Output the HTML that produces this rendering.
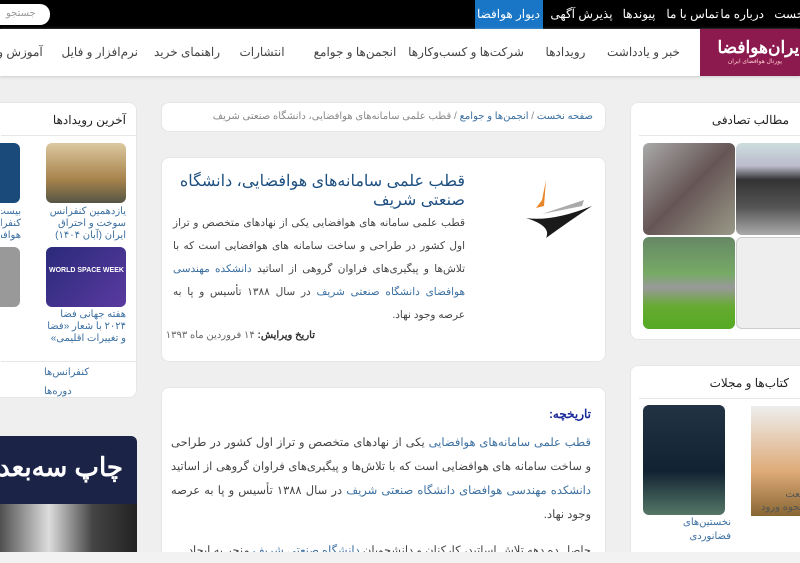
<!DOCTYPE html>
<html style="width:800px;height:563px;overflow:hidden"><head><meta charset="utf-8"><style>
*{margin:0;padding:0;box-sizing:border-box}
body{width:800px;height:563px;overflow:hidden;background:#efefef;font-family:"Liberation Sans","Noto Sans CJK SC",sans-serif;position:relative;direction:rtl;color:#333}
.a{position:absolute}
.top{left:0;top:0;width:800px;height:29px;background:#000;}
.top span{position:absolute;top:7px;color:#fff;font-size:12px;white-space:nowrap;text-align:center}
.nav{left:0;top:29px;width:800px;height:47px;background:#fff;box-shadow:0 1px 3px #ccc}
.nav span{position:absolute;top:16px;font-size:12px;color:#444;white-space:nowrap;text-align:center}
.card{background:#fff;border-radius:8px;border:1px solid #e6e6e6}
.t{font-size:10.5px;line-height:23px;text-align:justify;color:#444;letter-spacing:-0.1px}
.l{color:#3b6fa0}
</style></head><body>
<div class="a top">
 <div class="a" style="left:475px;top:0;width:68px;height:29px;background:#1976c6"></div>
 <span style="left:771px;width:40px">نخست</span>
 <span style="left:724px;width:40px">درباره ما</span>
 <span style="left:666px;width:53px">تماس با ما</span>
 <span style="left:618px;width:42px">پیوندها</span>
 <span style="left:549px;width:65px">پذیرش آگهی</span>
 <span style="left:478px;width:62px">دیوار هوافضا</span>
 <div class="a" style="left:-10px;top:4px;width:60px;height:21px;background:#fff;border-radius:10px"><span style="left:16px;top:4px;color:#999;font-size:10px">جستجو</span></div>
</div>
<div class="a nav">
 <div class="a" style="left:700px;top:0;width:100px;height:47px;background:#8c1a4f"><span style="right:-4px;top:9px;color:#fff;font-size:17px;font-weight:bold">ایران‌هوافضا</span><span style="right:18px;top:29px;color:#fcc;font-size:6px">پورتال هوافضای ایران</span></div>
 <span style="left:606px;width:75px">خبر و یادداشت</span>
 <span style="left:538px;width:55px">رویدادها</span>
 <span style="left:406px;width:120px">شرکت‌ها و کسب‌وکارها</span>
 <span style="left:312px;width:86px">انجمن‌ها و جوامع</span>
 <span style="left:236px;width:52px">انتشارات</span>
 <span style="left:150px;width:74px">راهنمای خرید</span>
 <span style="left:62px;width:76px">نرم‌افزار و فایل</span>
 <span style="left:-10px;width:60px">آموزش و</span>
</div>

<div class="a card" style="left:630px;top:102px;width:180px;height:238px">
 <div class="a" style="right:20px;top:10px;font-size:12px;color:#222">مطالب تصادفی</div>
 <div class="a" style="left:8px;top:32px;width:170px;border-top:1px solid #e6e6e6"></div>
 <div class="a" style="left:12px;top:40px;width:92px;height:92px;border-radius:6px;background:linear-gradient(135deg,#aaa,#655 50%,#998)"></div>
 <div class="a" style="left:105px;top:40px;width:80px;height:92px;border-radius:6px;background:linear-gradient(180deg,#cdd 0,#bbc 25%,#333 40%,#555 70%,#aaa)"></div>
 <div class="a" style="left:12px;top:134px;width:92px;height:92px;border-radius:6px;background:linear-gradient(180deg,#686 0,#7a6 40%,#999 55%,#6a3 75%,#5a2)"></div>
 <div class="a" style="left:105px;top:134px;width:80px;height:92px;border-radius:6px;background:#eee;border:1px solid #ccc"></div>
</div>
<div class="a card" style="left:630px;top:365px;width:180px;height:210px">
 <div class="a" style="right:20px;top:10px;font-size:12px;color:#222">کتاب‌ها و مجلات</div>
 <div class="a" style="left:8px;top:32px;width:170px;border-top:1px solid #e6e6e6"></div>
 <div class="a" style="left:12px;top:39px;width:82px;height:110px;border-radius:6px;background:linear-gradient(180deg,#234 0,#123 60%,#576 100%)"></div>
 <div class="a" style="left:120px;top:40px;width:70px;height:110px;background:linear-gradient(#eee,#da7 60%,#863)"></div>
 <div class="a l" style="left:40px;top:150px;font-size:10px;width:60px;line-height:14px">نخستین‌های فضانوردی</div>
 <div class="a l" style="left:130px;top:122px;font-size:10px;line-height:13px;color:#555;white-space:nowrap">با صنعت<br>ن و نحوه ورود</div>
</div>

<div class="a card" style="left:161px;top:102px;width:445px;height:30px">
 <div class="a" style="right:12px;top:8px;font-size:10px;color:#888;white-space:nowrap"><span class="l">صفحه نخست</span> / <span class="l">انجمن‌ها و جوامع</span> / قطب علمی سامانه‌های هوافضایی، دانشگاه صنعتی شریف</div>
</div>
<div class="a card" style="left:161px;top:157px;width:445px;height:205px">
 <svg class="a" style="left:360px;top:20px" width="72" height="62" viewBox="0 0 72 62"><path d="M24 2 L20 22 L14 30 L22 28 Z" fill="#e8872a"/><path d="M4 40 Q30 44 70 28 Q46 44 24 60 Q30 48 4 40Z" fill="#1a1a1a"/><path d="M20 36 L62 22 L60 28 Z" fill="#aaa"/></svg>
 <div class="a" style="right:140px;top:14px;width:290px;font-size:16px;color:#1d4f80;line-height:19px">قطب علمی سامانه‌های هوافضایی، دانشگاه صنعتی شریف</div>
 <div class="a t" style="right:140px;top:54px;width:292px">قطب علمی سامانه های هوافضایی یکی از نهادهای متخصص و تراز اول کشور در طراحی و ساخت سامانه های هوافضایی است که با تلاش‌ها و پیگیری‌های فراوان گروهی از اساتید <span class="l">دانشکده مهندسی هوافضای دانشگاه صنعتی شریف</span> در سال ۱۳۸۸ تأسیس و پا به عرصه وجود نهاد.</div>
 <div class="a" style="right:290px;top:172px;font-size:10px;color:#666;white-space:nowrap"><b style="color:#333">تاریخ ویرایش:</b> ۱۴ فروردین ماه ۱۳۹۳</div>
</div>
<div class="a card" style="left:161px;top:387px;width:445px;height:200px">
 <div class="a" style="right:14px;top:19px;font-size:12px;color:#1a2a9a;font-weight:bold">تاریخچه:</div>
 <div class="a t" style="right:14px;top:43px;width:420px;line-height:24px;font-size:11.5px"><span class="l">قطب علمی سامانه‌های هوافضایی</span> یکی از نهادهای متخصص و تراز اول کشور در طراحی و ساخت سامانه های هوافضایی است که با تلاش‌ها و پیگیری‌های فراوان گروهی از اساتید <span class="l">دانشکده مهندسی هوافضای دانشگاه صنعتی شریف</span> در سال ۱۳۸۸ تأسیس و پا به عرصه وجود نهاد.</div>
 <div class="a t" style="right:14px;top:152px;width:420px;white-space:nowrap;overflow:hidden;font-size:11.5px">حاصل ده دهه تلاش اساتید، کارکنان و دانشجویان <span class="l">دانشگاه صنعتی شریف</span> منجر به ایجاد</div>
</div>

<div class="a card" style="left:-10px;top:102px;width:147px;height:296px">
 <div class="a" style="right:10px;top:10px;font-size:12px;color:#222">آخرین رویدادها</div>
 <div class="a" style="left:10px;top:32px;width:135px;border-top:1px solid #e6e6e6"></div>
 <div class="a" style="left:55px;top:40px;width:80px;height:60px;border-radius:6px;background:linear-gradient(180deg,#dcc8a0,#a8844c 60%,#554)"></div>
 <div class="a" style="left:0;top:40px;width:29px;height:60px;border-radius:6px;background:#1a4a7a"></div>
 <div class="a l" style="right:10px;top:103px;width:84px;font-size:10px;line-height:12px">یازدهمین کنفرانس سوخت و احتراق ایران (آبان ۱۴۰۴)</div>
 <div class="a l" style="left:10px;top:103px;width:20px;font-size:10px;line-height:12px;overflow:hidden;white-space:nowrap">بیست<br>کنفرا<br>هوافض</div>
 <div class="a" style="left:55px;top:144px;width:80px;height:60px;border-radius:6px;background:linear-gradient(135deg,#2a2a7a,#5a3aa0);overflow:hidden"><span class="a" style="left:3px;top:20px;color:#fff;font-size:7px;font-weight:bold;direction:ltr;white-space:nowrap">WORLD SPACE WEEK</span></div>
 <div class="a" style="left:0;top:144px;width:29px;height:60px;border-radius:6px;background:#999"></div>
 <div class="a l" style="right:10px;top:206px;width:84px;font-size:10px;line-height:12px">هفته جهانی فضا ۲۰۲۴ با شعار «فضا و تغییرات اقلیمی»</div>
 <div class="a" style="left:10px;top:258px;width:135px;border-top:1px solid #e6e6e6"></div>
 <div class="a l" style="left:53px;top:264px;font-size:10px">کنفرانس‌ها</div>
 <div class="a l" style="left:53px;top:283px;font-size:10px">دوره‌ها</div>
</div>
<div class="a" style="left:-10px;top:436px;width:147px;height:130px;background:#1b2347;border-radius:6px;overflow:hidden">
 <div class="a" style="right:14px;top:16px;color:#fff;font-size:26px;font-weight:bold;white-space:nowrap">چاپ سه‌بعدی</div>
 <div class="a" style="left:0;top:68px;width:147px;height:62px;background:linear-gradient(90deg,#333,#ddd 40%,#444 70%,#222)"></div>
</div>
<div class="a" style="left:0;top:552px;width:800px;height:11px;background:#f2f2f2"></div>
</body></html>
